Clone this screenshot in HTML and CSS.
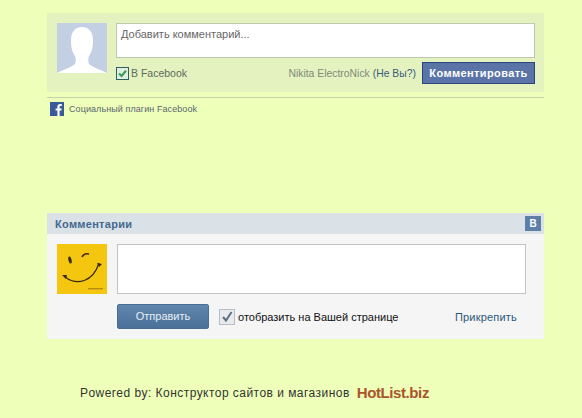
FILE: index.html
```html
<!DOCTYPE html>
<html lang="en">
<head>
    <meta charset="UTF-8">
    <title>comments</title>
    <link rel="stylesheet" href="styles.css">
</head>
<body>
    <div class="content">
        <div class="fb-box">
            <svg class="fb-avatar" width="50" height="50" viewBox="0 0 50 50">
                <rect width="50" height="50" fill="#c3cfe2"/>
                <path d="M0 50 C8 46 15 44 18 41 C19 38 19 36 18 33 C15 29 14 24 14 17 C14 8 19 4 25 4 C31 4 36 8 36 17 C36 24 35 29 32 33 C31 36 31 38 32 41 C35 44 42 46 50 50 Z" fill="#fff"/>
            </svg>
            <div class="fb-main">
                <div class="fb-input">Добавить комментарий...</div>
                <div class="fb-row">
                    <span class="fb-check">
                        <svg width="11" height="11" viewBox="0 0 11 11"><path d="M2 5.5 L4.6 8 L9 2.8" fill="none" stroke="#3d9a5a" stroke-width="2.2"/></svg>
                    </span>
                    <span class="fb-label">В Facebook</span>
                    <span class="fb-user">Nikita ElectroNick <span class="fb-notyou">(Не Вы?)</span></span>
                    <span class="fb-button">Комментировать</span>
                </div>
            </div>
        </div>
        <div class="fb-footer">
            <svg width="14" height="14" viewBox="0 0 14 14">
                <rect width="14" height="14" fill="#3b5998"/>
                <path d="M9.6 14 V8.6 H11.4 L11.7 6.4 H9.6 V5.1 C9.6 4.4 9.9 4 10.7 4 H11.8 V2.1 C11.4 2 10.8 2 10.1 2 C8.5 2 7.4 3 7.4 4.8 V6.4 H5.6 V8.6 H7.4 V14 Z" fill="#fff"/>
            </svg>
            <span>Социальный плагин Facebook</span>
        </div>

        <div class="vk-box">
            <div class="vk-head">
                <span class="vk-title">Комментарии</span>
                <span class="vk-logo">В</span>
            </div>
            <div class="vk-body">
                <svg class="vk-avatar" width="50" height="50" viewBox="0 0 50 50">
                    <rect width="50" height="50" fill="#f5c60f"/>
                    <ellipse cx="13" cy="16" rx="1.6" ry="3.6" fill="#3a2a08" transform="rotate(-12 13 16)"/>
                    <path d="M25 13 Q27 9 32 10" fill="none" stroke="#3a2a08" stroke-width="1.6"/>
                    <path d="M8 33 C20 42 36 38 42 19" fill="none" stroke="#3a2a08" stroke-width="1.2"/>
                    <path d="M5 31 L10 31 L9 35 Z M40 19 L45 20 L42 23 Z" fill="#3a2a08"/>
                    <rect x="31" y="44" width="15" height="1.4" fill="#b98a10"/>
                </svg>
                <div class="vk-main">
                    <div class="vk-input"></div>
                    <div class="vk-row">
                        <span class="vk-button">Отправить</span>
                        <span class="vk-check">
                            <svg width="14" height="14" viewBox="0 0 14 14"><path d="M3 7 L6 10.5 L11.5 2" fill="none" stroke="#5f6f80" stroke-width="2"/></svg>
                        </span>
                        <span class="vk-label">отобразить на Вашей странице</span>
                        <span class="vk-attach">Прикрепить</span>
                    </div>
                </div>
            </div>
        </div>

        <div class="powered">
            <span>Powered by: Конструктор сайтов и магазинов</span>
            <span class="hotlist">HotList.biz</span>
        </div>
    </div>
</body>
</html>
```

FILE: styles.css
```css
body {
    margin: 0;
    background: #eeffba;
    font-family: "Liberation Sans", Arial, sans-serif;
}
.content {
    width: 497px;
    margin-left: 47px;
    padding-top: 13px;
}

/* facebook plugin */
.fb-box {
    display: flex;
    gap: 9px;
    height: 79px;
    padding: 10px 9px 0 10px;
    box-sizing: border-box;
    background: #e4f2c0;
}
.fb-avatar {
    flex: none;
}
.fb-main {
    flex: 1;
}
.fb-input {
    height: 35px;
    box-sizing: border-box;
    padding: 3px 4px;
    background: #fff;
    border: 1px solid #c0c8b0;
    font-size: 11px;
    line-height: 14px;
    color: #666;
}
.fb-row {
    display: flex;
    align-items: center;
    margin-top: 4px;
    height: 22px;
}
.fb-check {
    display: flex;
    align-items: center;
    justify-content: center;
    width: 11px;
    height: 11px;
    background: #dff0e0;
    border: 1px solid #2f5f5f;
}
.fb-label {
    margin-left: 2px;
    font-size: 10.5px;
    color: #5d6b60;
}
.fb-user {
    margin-left: auto;
    margin-right: 6px;
    font-size: 10.4px;
    color: #7f8a78;
}
.fb-notyou {
    color: #3b5a7a;
}
.fb-button {
    width: 113px;
    height: 22px;
    box-sizing: border-box;
    background: #5b74a8;
    border: 1px solid #29447e;
    color: #fff;
    font-size: 11px;
    font-weight: bold;
    letter-spacing: 0.4px;
    line-height: 20px;
    text-align: center;
}
.fb-footer {
    display: flex;
    align-items: center;
    gap: 5px;
    height: 22px;
    margin-top: 5px;
    padding: 0 3px;
    border-top: 1px solid #c6d2ae;
    font-size: 9px;
    letter-spacing: 0.08px;
    color: #5b6670;
}

/* vk widget */
.vk-box {
    margin-top: 93px;
}
.vk-head {
    display: flex;
    align-items: center;
    justify-content: space-between;
    height: 21px;
    padding: 0 3px 0 8px;
    background: #dae2e8;
}
.vk-title {
    font-size: 11px;
    font-weight: bold;
    letter-spacing: 0.3px;
    color: #45688e;
}
.vk-logo {
    width: 16px;
    height: 15px;
    background: #5b7fa6;
    color: #fff;
    font-size: 10px;
    font-weight: bold;
    line-height: 15px;
    text-align: center;
}
.vk-body {
    display: flex;
    gap: 10px;
    height: 105px;
    padding: 10px 18px 0 10px;
    box-sizing: border-box;
    background: #f5f5f6;
}
.vk-avatar {
    flex: none;
}
.vk-main {
    flex: 1;
}
.vk-input {
    height: 50px;
    box-sizing: border-box;
    background: #fff;
    border: 1px solid #c0c4c8;
}
.vk-row {
    display: flex;
    align-items: center;
    margin-top: 10px;
    height: 25px;
    font-size: 11px;
}
.vk-button {
    width: 92px;
    height: 25px;
    box-sizing: border-box;
    background: linear-gradient(#6186ad, #4c7199);
    border: 1px solid #4a6d92;
    border-radius: 2px;
    color: #e8eef4;
    line-height: 23px;
    text-align: center;
}
.vk-check {
    display: flex;
    align-items: center;
    justify-content: center;
    width: 14px;
    height: 14px;
    margin-left: 10px;
    background: #e8ebee;
    border: 1px solid #b5bec7;
}
.vk-label {
    margin-left: 3px;
    color: #111;
}
.vk-attach {
    margin-left: auto;
    margin-right: 9px;
    letter-spacing: 0.2px;
    color: #2b587a;
}

/* footer */
.powered {
    display: flex;
    align-items: center;
    gap: 7px;
    margin-top: 45px;
    margin-left: 33px;
    font-size: 12px;
    letter-spacing: 0.46px;
    color: #333;
}
.hotlist {
    font-size: 15px;
    font-weight: bold;
    letter-spacing: -0.4px;
    color: #a8552a;
}
```
